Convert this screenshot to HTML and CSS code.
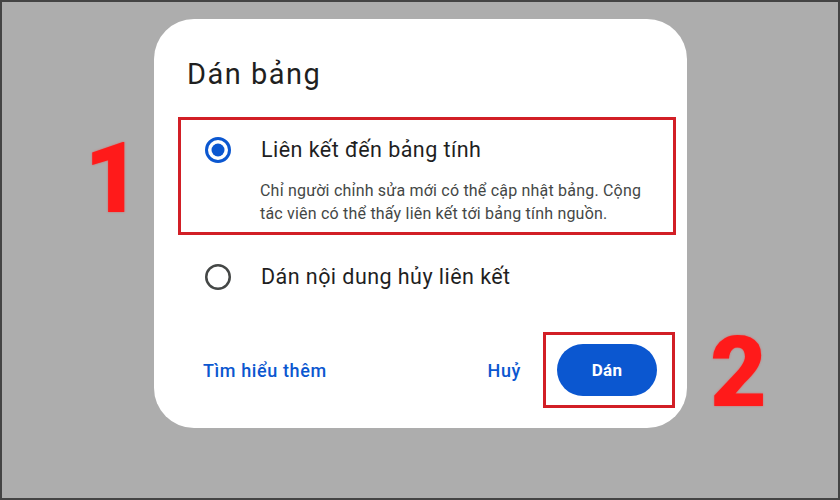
FILE: index.html
```html
<!DOCTYPE html>
<html lang="vi">
<head>
<meta charset="utf-8">
<title>Dán bảng</title>
<link rel="stylesheet" href="styles.css">
</head>
<body>
<div class="page">
  <div class="side side-left"><span class="num num-1">1</span></div>
  <div class="dialog">
    <h1 class="title">Dán bảng</h1>
    <div class="mark mark-option">
      <div class="option">
        <svg class="radio" width="26" height="26" viewBox="0 0 26 26"><circle cx="13" cy="13" r="11.5" fill="none" stroke="#0b57d0" stroke-width="3"/><circle cx="13" cy="13" r="6.5" fill="#0b57d0"/></svg>
        <span class="option-label">Liên kết đến bảng tính</span>
      </div>
      <p class="desc">Chỉ người chỉnh sửa mới có thể cập nhật bảng. Cộng<br>tác viên có thể thấy liên kết tới bảng tính nguồn.</p>
    </div>
    <div class="option option-2">
      <svg class="radio" width="26" height="26" viewBox="0 0 26 26"><circle cx="13" cy="13" r="11.75" fill="none" stroke="#444746" stroke-width="2.5"/></svg>
      <span class="option-label">Dán nội dung hủy liên kết</span>
    </div>
    <div class="footer">
      <span class="link learn">Tìm hiểu thêm</span>
      <span class="link cancel">Huỷ</span>
      <div class="mark mark-button">
        <span class="btn">Dán</span>
      </div>
    </div>
  </div>
  <div class="side side-right"><span class="num num-2">2</span></div>
</div>
</body>
</html>
```
FILE: styles.css
```css
* { box-sizing: border-box; }
html, body { margin: 0; padding: 0; }
body { font-family: Roboto, "Noto Sans", "DejaVu Sans", sans-serif; }

.page {
  width: 840px;
  height: 500px;
  background: #adadad;
  border: 2px solid #444;
  display: flex;
  align-items: flex-start;
  overflow: hidden;
}

.side { flex: none; }
.side-left {
  width: 152px;
  margin-top: 128px;
  text-align: right;
  padding-right: 13px;
}
.side-right {
  margin-top: 322px;
  margin-left: 23px;
}
.num {
  display: block;
  font-family: Roboto, sans-serif;
  font-weight: 900;
  font-size: 98px;
  line-height: 98px;
  color: #ff1a1a;
  text-shadow: 0 0 2px rgba(255, 40, 40, 0.6);
}

.dialog {
  flex: none;
  width: 533px;
  height: 409px;
  margin-top: 17px;
  background: #fff;
  border-radius: 40px;
  display: flex;
  flex-direction: column;
  padding-top: 37px;
}

.title {
  margin: 0 0 25px 33px;
  font-size: 29px;
  line-height: 36px;
  font-weight: 400;
  color: #1f1f1f;
  letter-spacing: 1.5px;
}

.mark {
  border: 3px solid #d21f26;
}
.mark-option {
  margin-left: 24px;
  width: 498px;
  height: 118px;
  padding-top: 17px;
}

.option {
  display: flex;
  align-items: center;
  height: 26px;
}
.mark-option .option { padding-left: 24px; }
.radio { flex: none; display: block; }
.option-label {
  margin-left: 30px;
  font-size: 21.5px;
  line-height: 26px;
  color: #1f1f1f;
  letter-spacing: 0.45px;
}
.option-2 {
  margin-top: 29px;
  padding-left: 51px;
}

.desc {
  margin: 16px 0 0 79px;
  font-size: 16px;
  line-height: 23px;
  color: #444746;
  letter-spacing: 0.2px;
}

.footer {
  display: flex;
  align-items: center;
  margin-top: 42px;
}
.link {
  font-size: 18px;
  font-weight: 500;
  color: #0b57d0;
  letter-spacing: 0.6px;
}
.learn { margin-left: 49px; }
.cancel { margin-left: auto; margin-right: 22px; }
.mark-button {
  width: 132px;
  height: 76px;
  margin-right: 12px;
  padding: 9px 15px 9px 11px;
}
.btn {
  display: flex;
  align-items: center;
  justify-content: center;
  width: 100px;
  height: 52px;
  border-radius: 26px;
  background: #0b57d0;
  color: #fff;
  font-size: 17px;
  font-weight: 700;
  letter-spacing: 0.3px;
}
```
